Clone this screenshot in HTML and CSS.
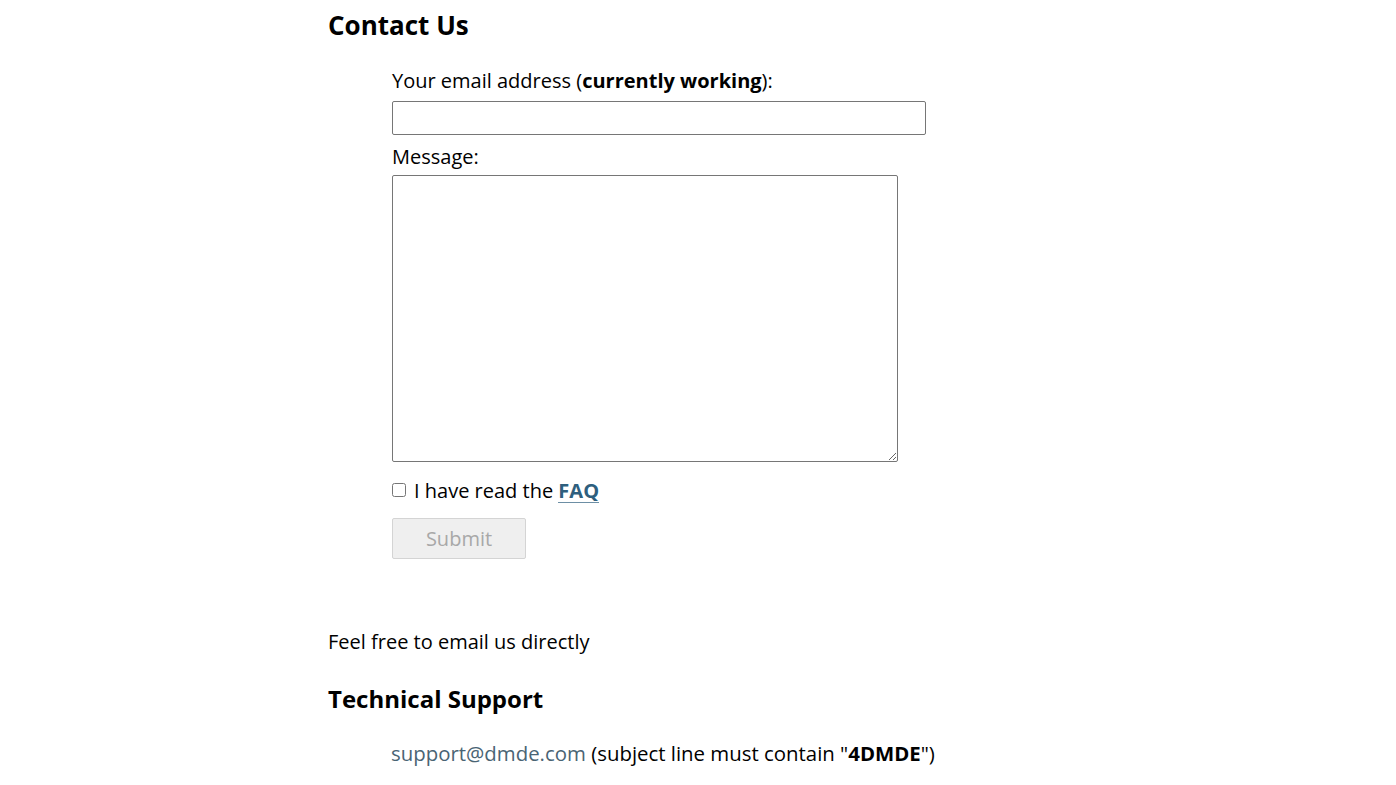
FILE: index.html
```html
<!DOCTYPE html>
<html lang="en">
<head>
<meta charset="utf-8">
<title>Contact Us</title>
<link rel="stylesheet" href="styles.css">
</head>
<body>
<main class="page">
  <h2 class="title">Contact Us</h2>
  <form class="contact-form">
    <label class="field-label" for="email">Your email address (<b>currently working</b>):</label>
    <input class="text-input" id="email" type="email">
    <label class="field-label" for="msg">Message:</label>
    <textarea class="text-area" id="msg"></textarea>
    <div class="check-row">
      <input class="check" type="checkbox" id="faq">
      <label for="faq">I have read the <a class="faq-link" href="#">FAQ</a></label>
    </div>
    <button class="submit" type="submit" disabled>Submit</button>
  </form>
  <p class="direct">Feel free to email us directly</p>
  <h3 class="subtitle">Technical Support</h3>
  <p class="support"><a class="mail-link" href="#">support@dmde.com</a> (subject line must contain "<b>4DMDE</b>")</p>
</main>
</body>
</html>
```

FILE: styles.css
```css
html, body {
  margin: 0;
  padding: 0;
  background: #ffffff;
}

body {
  font-family: "Open Sans", sans-serif;
  font-size: 20px;
  color: #000;
}

.page {
  width: 740px;
  margin: 0 auto;
  display: flex;
  flex-direction: column;
  align-items: flex-start;
}

.title {
  font-size: 26px;
  line-height: 36px;
  font-weight: 700;
  margin: 7px 0 0;
}

.contact-form {
  margin: 23px 0 0 64px;
  display: flex;
  flex-direction: column;
  align-items: flex-start;
}

.field-label {
  line-height: 28px;
  padding-top: 1px;
  margin-bottom: -1px;
}

.text-input {
  margin: 7px 0 7px;
  width: 534px;
  height: 34px;
  box-sizing: border-box;
  border: 1px solid #767676;
  border-radius: 2px;
  font: inherit;
  padding: 2px 6px;
}

.text-area {
  margin-top: 5px;
  width: 506px;
  height: 287px;
  box-sizing: border-box;
  border: 1px solid #767676;
  border-radius: 2px;
  font: inherit;
}

.check-row {
  margin-top: 15px;
  display: flex;
  align-items: center;
  line-height: 28px;
}

.check {
  width: 14px;
  height: 14px;
  margin: 0 8px 0 0;
  position: relative;
  top: -1px;
}

.faq-link {
  color: #2e5f7e;
  font-weight: 700;
  text-decoration: none;
  border-bottom: 1px solid #6d8fa5;
  line-height: 23px;
  display: inline-block;
}

.submit {
  margin-top: 13px;
  width: 134px;
  height: 41px;
  box-sizing: border-box;
  background: #efefef;
  border: 1px solid #d4d4d4;
  border-radius: 2px;
  color: #a8a8a8;
  font: inherit;
  padding: 0;
}

.direct {
  margin: 69px 0 0;
  line-height: 28px;
}

.subtitle {
  font-size: 24px;
  line-height: 36px;
  font-weight: 700;
  margin: 25px 0 0;
}

.support {
  margin: 22px 0 0 63px;
  line-height: 28px;
  font-size: 20.4px;
}

.mail-link {
  color: #4a6474;
  text-decoration: none;
}
```
